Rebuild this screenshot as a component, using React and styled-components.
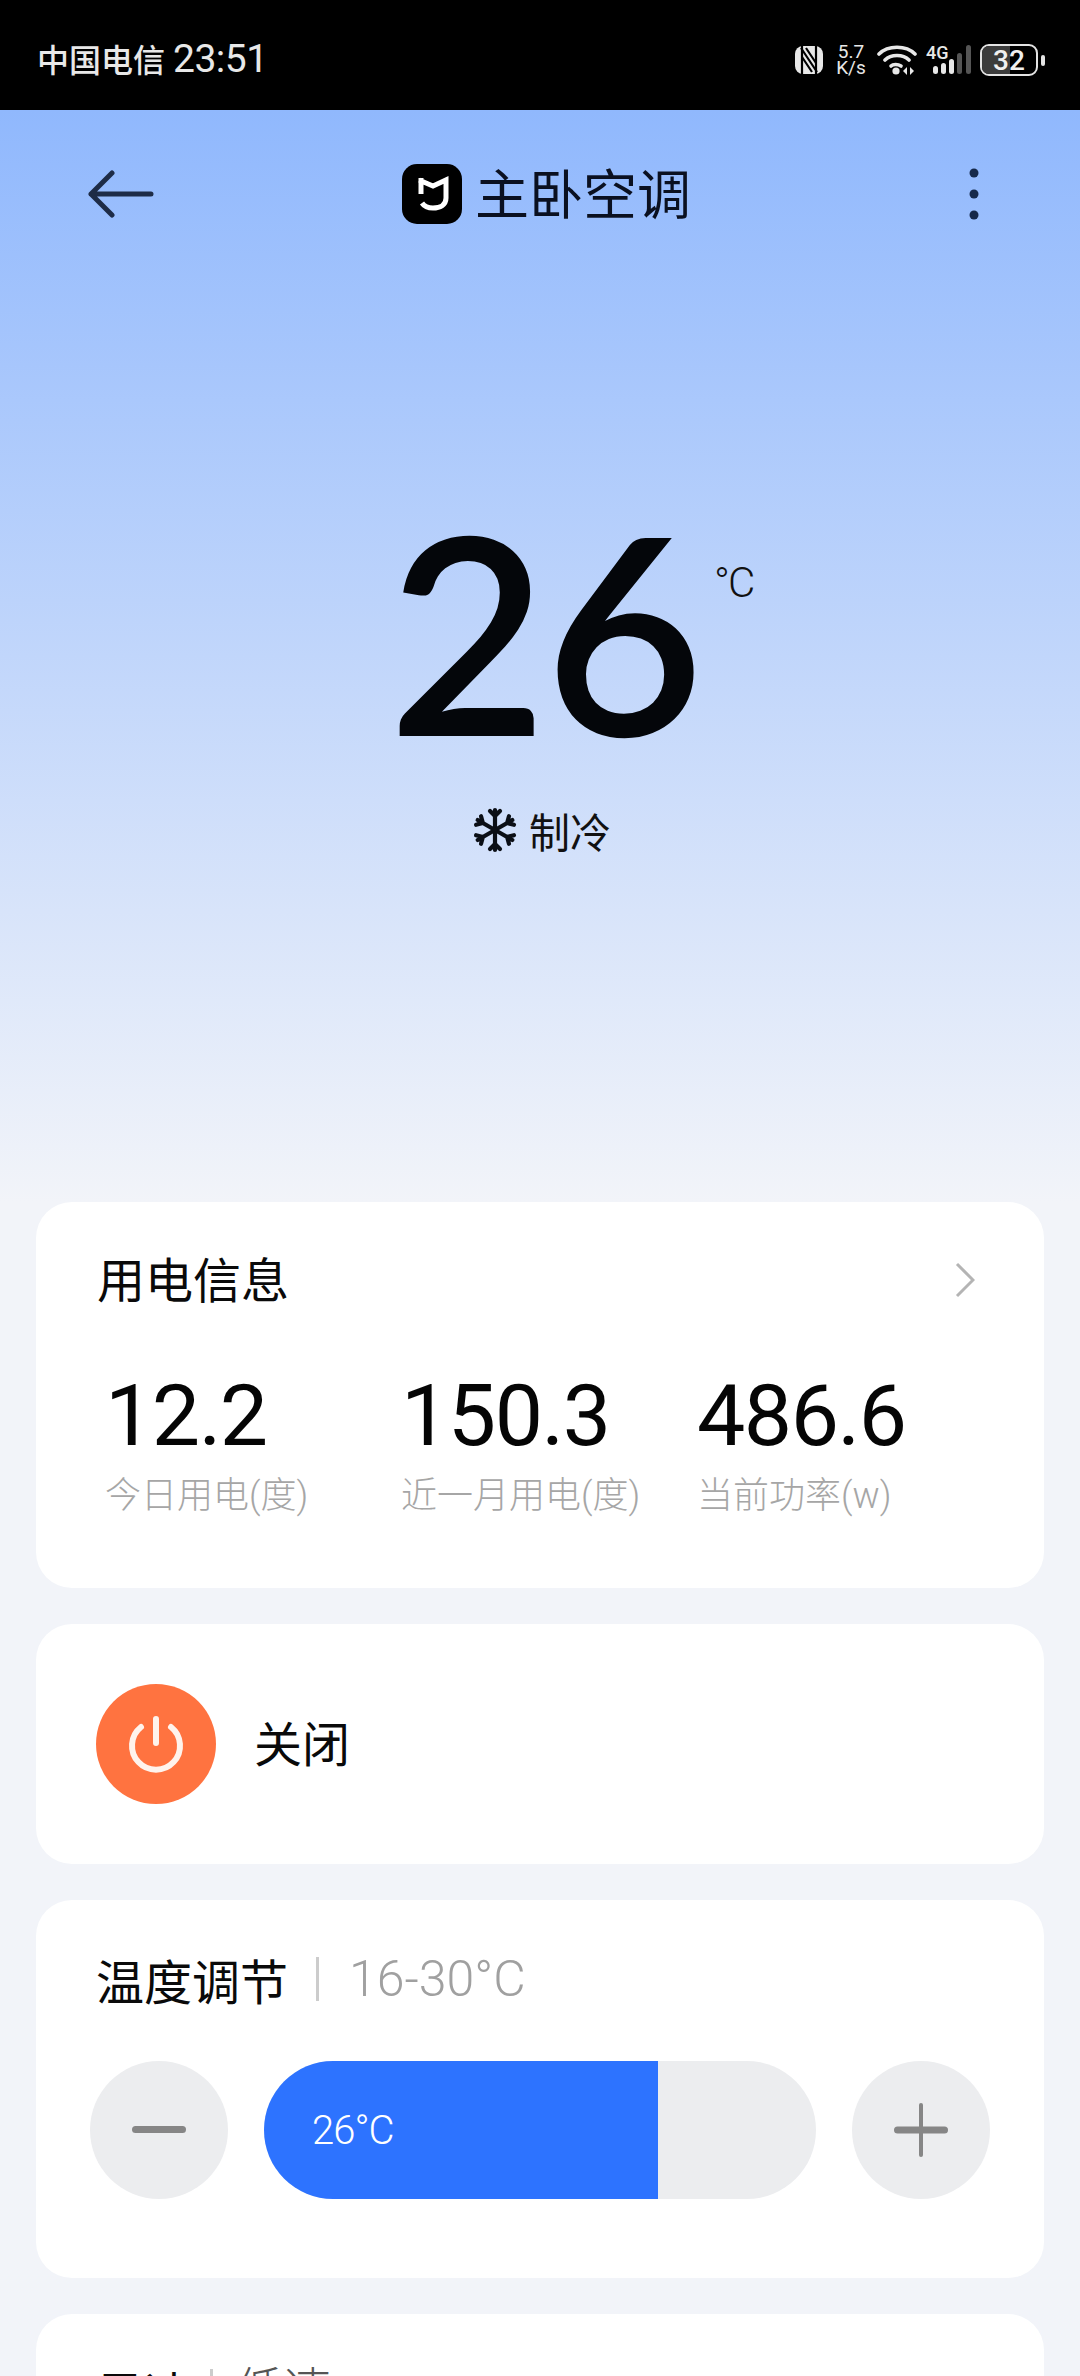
import React from 'react';
import styled, { createGlobalStyle } from 'styled-components';

const Global = createGlobalStyle`
  html, body { margin: 0; padding: 0; background: #f2f4f9; }
  body { font-family: "Roboto", "Noto Sans CJK SC", sans-serif; }
  #root { width: 1080px; height: 2376px; overflow: hidden; }
`;
const Page = styled.div`width:1080px;height:2376px;overflow:hidden;background:#f2f4f9;display:flex;flex-direction:column;`;
const StatusBar = styled.div`height:110px;background:#000;color:#e8e8e8;display:flex;align-items:center;justify-content:space-between;padding:10px 35px 0 37px;box-sizing:border-box;flex:none;`;
const Carrier = styled.div`font-size:32px;line-height:40px;display:flex;align-items:baseline;gap:8px;font-weight:500;`;
const Clock = styled.span`font-size:39px;letter-spacing:-0.5px;font-weight:400;`;
const StatusIcons = styled.div`display:flex;align-items:center;color:#e8e8e8;`;
const Speed = styled.div`font-size:19px;line-height:16px;text-align:center;width:32px;margin:0 10px 0 12px;white-space:nowrap;`;
const SignalIcon = styled.svg`margin:0 8px 0 9px;`;
const Battery = styled.div`position:relative;width:54px;height:28px;border:2px solid #e4e4e4;border-radius:9px;overflow:hidden;display:flex;align-items:center;justify-content:center;font-size:28px;font-weight:500;color:#f0f0f0;box-sizing:content-box;`;
const BatteryFill = styled.div`position:absolute;left:0;top:0;bottom:0;width:52%;background:#3c3c3c;`;
const BatteryNum = styled.span`position:relative;`;
const BatteryCap = styled.div`width:4px;height:11px;border-radius:2px;background:#e4e4e4;margin-left:3px;`;
const Hero = styled.div`height:1092px;flex:none;background:linear-gradient(#90b8fd 0%,#f2f4f9 100%);display:flex;flex-direction:column;`;
const Nav = styled.div`height:114px;margin-top:27px;padding:0 100px 0 88px;display:flex;align-items:center;`;
const NavTitle = styled.div`display:flex;align-items:center;gap:13px;font-size:54px;line-height:60px;color:#0a1020;margin-left:248px;font-family:"Noto Sans CJK SC",sans-serif;`;
const NavText = styled.span`margin-top:-5px;`;
const Logo = styled.div`width:60px;height:60px;border-radius:15px;background:#000;display:flex;align-items:center;justify-content:center;`;
const MoreIcon = styled.svg`margin-left:auto;`;
const Temp = styled.div`display:flex;padding-left:388px;margin-top:261px;height:236px;align-items:flex-start;`;
const TempValue = styled.div`font-family:"Lato",sans-serif;font-weight:600;font-size:275px;line-height:236px;color:#04060a;letter-spacing:-3px;`;
const TempUnit = styled.div`font-size:42px;line-height:40px;margin:51px 0 0 13px;color:#111;font-weight:300;letter-spacing:-2px;`;
const Mode = styled.div`display:flex;justify-content:center;align-items:center;gap:11px;font-size:41px;color:#111;margin-top:52px;height:60px;padding-left:3px;font-family:"Noto Sans CJK SC",sans-serif;`;
const Cards = styled.div`padding:0 36px;display:flex;flex-direction:column;gap:36px;`;
const Card = styled.div`background:#fff;border-radius:36px;box-sizing:border-box;height:${p => p.$h}px;padding:${p => p.$pad};`;
const CardHead = styled.div`display:flex;justify-content:space-between;align-items:center;font-size:48px;line-height:60px;color:#0a0a0a;font-family:"Noto Sans CJK SC",sans-serif;`;
const Chevron = styled.svg`margin-top:6px;`;
const Stats = styled.div`display:flex;margin-top:67px;`;
const Stat = styled.div`width:296px;flex:none;`;
const StatValue = styled.div`font-size:86px;line-height:84px;color:#050505;letter-spacing:-1.5px;padding-left:8px;`;
const StatLabel = styled.div`font-size:36px;line-height:44px;color:#a6a6a6;margin-top:16px;padding-left:8px;font-weight:300;white-space:nowrap;`;
const PowerRow = styled.div`display:flex;align-items:center;gap:38px;height:100%;`;
const PowerBtn = styled.div`width:120px;height:120px;border-radius:50%;background:#ff7340;display:flex;align-items:center;justify-content:center;`;
const PowerLabel = styled.div`font-size:48px;color:#0a0a0a;margin-top:-6px;font-family:"Noto Sans CJK SC",sans-serif;`;
const TempHead = styled.div`display:flex;align-items:center;font-size:48px;line-height:60px;color:#0a0a0a;font-family:"Noto Sans CJK SC",sans-serif;`;
const Divider = styled.div`width:3px;height:44px;background:#ccc;margin:${p => p.$m};`;
const Range = styled.span`color:${p => p.$c};font-weight:300;font-size:${p => p.$s}px;font-family:"Roboto","Noto Sans CJK SC",sans-serif;`;
const Controls = styled.div`display:flex;align-items:center;gap:36px;margin:52px 0 0 -6px;`;
const RoundBtn = styled.div`width:138px;height:138px;border-radius:50%;background:#ecedef;display:flex;align-items:center;justify-content:center;flex:none;`;
const Track = styled.div`width:552px;height:138px;border-radius:69px;background:#ecedef;overflow:hidden;flex:none;`;
const TrackFill = styled.div`height:100%;background:#2d73ff;color:#fff;font-size:40px;font-weight:300;display:flex;align-items:center;padding-left:48px;box-sizing:border-box;letter-spacing:-1px;`;
const Back = styled.svg`width:66px;height:48px;flex:none;`;

const arms = [0, 60, 120, 180, 240, 300];

export default function App() {
  return (
    <Page>
      <Global />
      <StatusBar>
        <Carrier>中国电信<Clock>23:51</Clock></Carrier>
        <StatusIcons>
          <svg width="28" height="30" viewBox="0 0 28 30"><rect x="0" y="1" width="28" height="28" rx="8" fill="#e8e8e8"/><path d="M7 0v30M21 0v30" stroke="#000" strokeWidth="2.2"/><path d="M6 3l16 24M11 3l10 15M7 12l10 15" stroke="#000" strokeWidth="2.2" fill="none"/></svg>
          <Speed>5.7<br/>K/s</Speed>
          <svg width="40" height="32" viewBox="0 0 40 32" fill="none" stroke="#e8e8e8" strokeWidth="3.6" strokeLinecap="round"><path d="M2 10C11 1 29 1 38 10M8 16c6-6 18-6 24 0"/><path d="M14 22c2-2 7-2 10 0"/><circle cx="19" cy="27" r="3.6" fill="#e8e8e8" stroke="none"/><path d="M30 23l-4 4 4 4zM33 23l4 4-4 4z" fill="#e8e8e8" stroke="none"/></svg>
          <SignalIcon width="46" height="32" viewBox="0 0 46 32"><text x="0" y="15" fontSize="18" fill="#e8e8e8" fontFamily="Roboto" fontWeight="500">4G</text><rect x="7" y="22" width="5" height="8" rx="2.5" fill="#e8e8e8"/><rect x="15" y="19" width="5" height="11" rx="2.5" fill="#e8e8e8"/><rect x="23" y="15" width="5" height="15" rx="2.5" fill="#e8e8e8"/><rect x="31" y="9" width="5" height="21" rx="2.5" fill="#555"/><rect x="40" y="1" width="5" height="29" rx="2.5" fill="#555"/></SignalIcon>
          <Battery><BatteryFill/><BatteryNum>32</BatteryNum></Battery>
          <BatteryCap/>
        </StatusIcons>
      </StatusBar>
      <Hero>
        <Nav>
          <Back viewBox="0 0 66 48" fill="none" stroke="#1e2c47" strokeWidth="5" strokeLinecap="round" strokeLinejoin="round"><path d="M63 24H3M24 3L3 24l21 21"/></Back>
          <NavTitle>
            <Logo><svg width="60" height="60" viewBox="0 0 60 60" fill="none" stroke="#fff" strokeWidth="5"><path d="M19 14v16M17 16l14 6 13-6v18c0 7-6 10-13 10-5 0-9-2-11-5"/></svg></Logo>
            <NavText>主卧空调</NavText>
          </NavTitle>
          <MoreIcon width="12" height="56" viewBox="0 0 12 56" fill="#16294a"><circle cx="6" cy="7" r="4.5"/><circle cx="6" cy="28" r="4.5"/><circle cx="6" cy="49" r="4.5"/></MoreIcon>
        </Nav>
        <Temp><TempValue>26</TempValue><TempUnit>°C</TempUnit></Temp>
        <Mode>
          <svg width="46" height="46" viewBox="0 0 46 46" fill="none" stroke="#0b0f16" strokeWidth="4.2" strokeLinecap="round" strokeLinejoin="round">
            {arms.map(a => <path key={a} transform={`rotate(${a} 23 23)`} d="M23 23V3M18 4l5 5 5-5"/>)}
          </svg>
          制冷
        </Mode>
      </Hero>
      <Cards>
        <Card $h={386} $pad="45px 69px 0 61px">
          <CardHead>用电信息
            <Chevron width="20" height="36" viewBox="0 0 20 36" fill="none" stroke="#b4b4b4" strokeWidth="3"><path d="M2 2l16 16L2 34"/></Chevron>
          </CardHead>
          <Stats>
            <Stat><StatValue>12.2</StatValue><StatLabel>今日用电(度)</StatLabel></Stat>
            <Stat><StatValue>150.3</StatValue><StatLabel>近一月用电(度)</StatLabel></Stat>
            <Stat><StatValue>486.6</StatValue><StatLabel>当前功率(w)</StatLabel></Stat>
          </Stats>
        </Card>
        <Card $h={240} $pad="0 60px">
          <PowerRow>
            <PowerBtn><svg width="60" height="60" viewBox="0 0 60 60" fill="none" stroke="#fff3ec" strokeWidth="6" strokeLinecap="round"><path d="M30 5v24M15 13a24 24 0 1 0 30 0"/></svg></PowerBtn>
            <PowerLabel>关闭</PowerLabel>
          </PowerRow>
        </Card>
        <Card $h={378} $pad="49px 60px 0 60px">
          <TempHead>温度调节<Divider $m="0 30px 0 28px"/><Range $c="#a0a0a0" $s={50}>16-30°C</Range></TempHead>
          <Controls>
            <RoundBtn><svg width="54" height="8" viewBox="0 0 54 8"><rect width="54" height="7" rx="3.5" fill="#868686"/></svg></RoundBtn>
            <Track><TrackFill style={{width:394}}>26°C</TrackFill></Track>
            <RoundBtn><svg width="54" height="54" viewBox="0 0 54 54" fill="#868686"><rect y="23.5" width="54" height="7" rx="3.5"/><rect x="25" width="4" height="54" rx="2"/></svg></RoundBtn>
          </Controls>
        </Card>
        <Card $h={300} $pad="47px 60px 0 60px">
          <TempHead>风速<Divider $m="0 22px 0 18px"/><Range $c="#555" $s={48}>低速</Range></TempHead>
        </Card>
      </Cards>
    </Page>
  );
}
